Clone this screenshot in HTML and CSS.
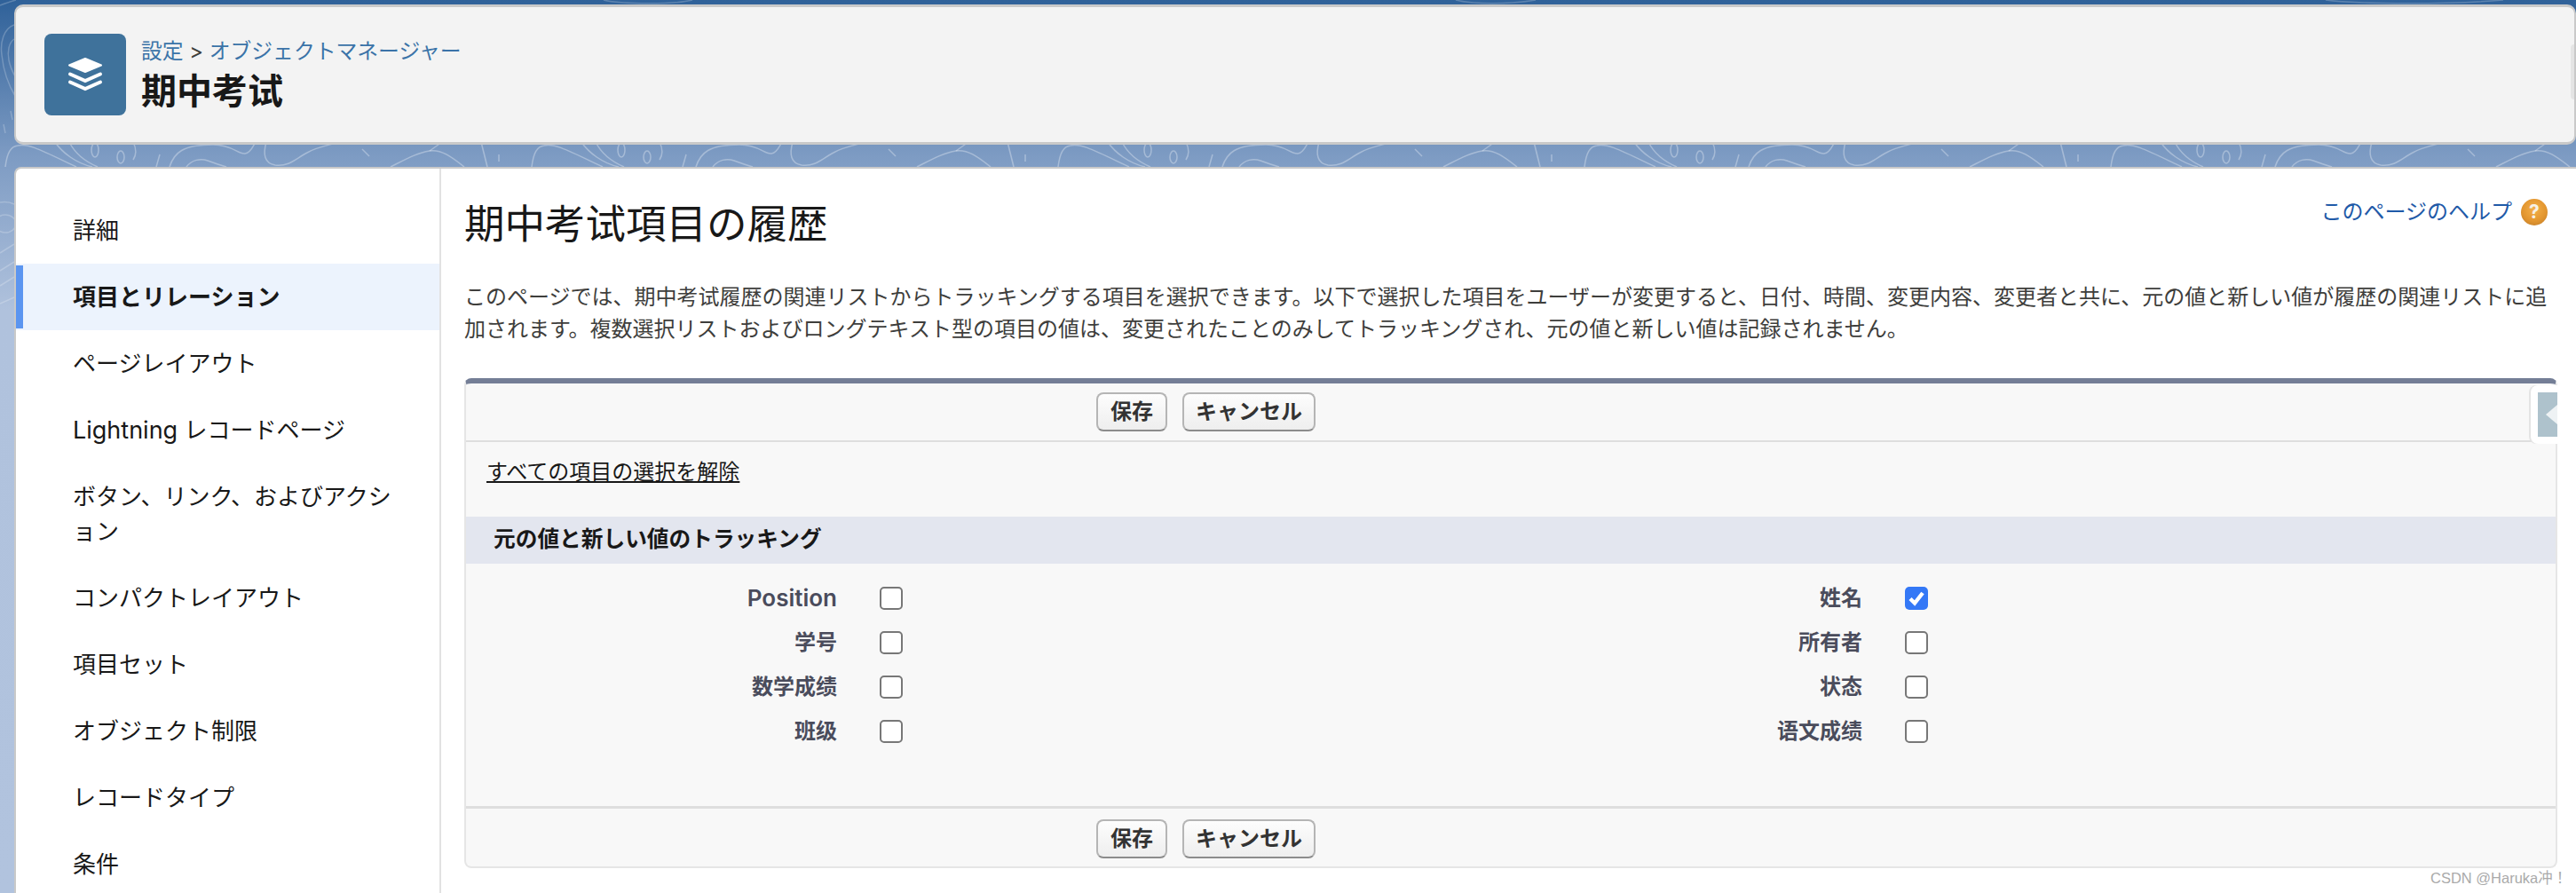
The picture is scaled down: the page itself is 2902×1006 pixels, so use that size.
FILE: index.html
```html
<!DOCTYPE html>
<html lang="ja">
<head>
<meta charset="utf-8">
<title>期中考试項目の履歴</title>
<link rel="stylesheet" href="styles.css">
</head>
<body>
<svg class="contours" viewBox="0 0 2902 1006" aria-hidden="true">
  <defs>
    <pattern id="topo" x="0" y="150" width="593" height="50" patternUnits="userSpaceOnUse">
      <g fill="none" stroke="#fff" stroke-opacity=".32" stroke-width="1.5">
        <path d="M6 38C8 22 12 15 20 14 32 11 48 20 86 38"/>
        <path d="M62 10C70 22 86 34 104 38M78 10C84 22 96 32 110 38"/>
        <ellipse cx="107" cy="19" rx="4" ry="8"/>
        <ellipse cx="136" cy="27" rx="4" ry="7"/>
        <path d="M150 10C154 18 154 24 150 30M180 24 176 38"/>
        <path d="M191 38C196 22 206 13 240 13 262 13 268 24 276 23 283 22 285 14 288 10"/>
        <path d="M210 38C216 30 226 28 234 31S248 36 255 38"/>
        <path d="M300 10C296 24 298 34 310 36 326 38 334 28 346 22 356 16 368 14 383 10"/>
        <path d="M408 18 416 26"/>
        <path d="M440 38C456 30 470 22 484 20 498 18 510 28 523 38"/>
        <path d="M484 20 498 10"/>
        <path d="M542 10 549 38"/>
        <path d="M562 24V32"/>
      </g>
    </pattern>
  </defs>
  <rect x="0" y="160" width="2902" height="30" fill="url(#topo)"/>
  <g fill="none" stroke="#fff" stroke-opacity=".22" stroke-width="1.5">
    <path d="M16 28C4 32 0 48 2 62 4 82 12 100 18 110"/>
    <path d="M16 44C10 48 8 58 10 68 12 78 16 84 18 88"/>
    <ellipse cx="6" cy="252" rx="12" ry="10"/>
    <path d="M0 228C6 227 12 228 16 230M0 285 16 275M0 305 16 295M0 322 16 312M0 342 16 335"/>
    <path d="M0 6C8 3 14 1 18 0M680 0C700 5 760 5 780 0M1640 0C1660 5 1700 5 1730 0M2620 0C2660 5 2760 5 2820 0"/>
    <path d="M12 125 14 135M4 140 6 150"/>
  </g>
</svg>

<header class="page-header">
  <div class="object-icon">
    <svg class="layers" viewBox="0 0 40 40" aria-hidden="true">
      <path fill="#fff" stroke="#fff" stroke-width="2" stroke-linejoin="round" d="M20 2 38 9.5 20 17 2 9.500Z"/>
      <path fill="none" stroke="#fff" stroke-width="4" stroke-linecap="round" d="M3 19.500 20 27 37 19.500"/>
      <path fill="none" stroke="#fff" stroke-width="4" stroke-linecap="round" d="M3 28.500 20 36 37 28.500"/>
    </svg>
  </div>
  <div class="header-text">
    <div class="crumbs"><a>設定</a> &gt; <a>オブジェクトマネージャー</a></div>
    <h1 class="object-name">期中考试</h1>
  </div>
  <span class="header-handle"></span>
</header>

<div class="panel">
  <nav class="sidebar">
    <a class="nav-item">詳細</a>
    <a class="nav-item active">項目とリレーション</a>
    <a class="nav-item">ページレイアウト</a>
    <a class="nav-item"><span class="latin">Lightning</span> レコードページ</a>
    <a class="nav-item">ボタン、リンク、およびアクション</a>
    <a class="nav-item">コンパクトレイアウト</a>
    <a class="nav-item">項目セット</a>
    <a class="nav-item">オブジェクト制限</a>
    <a class="nav-item">レコードタイプ</a>
    <a class="nav-item">条件</a>
  </nav>

  <main class="content">
    <div class="title-row">
      <h2 class="page-title">期中考试項目の履歴</h2>
      <a class="help">このページのヘルプ <span class="help-icon">?</span></a>
    </div>
    <p class="intro">このページでは、期中考试履歴の関連リストからトラッキングする項目を選択できます。以下で選択した項目をユーザーが変更すると、日付、時間、変更内容、変更者と共に、元の値と新しい値が履歴の関連リストに追加されます。複数選択リストおよびロングテキスト型の項目の値は、変更されたことのみしてトラッキングされ、元の値と新しい値は記録されません。</p>

    <section class="form-block">
      <div class="button-bar top">
        <button class="btn save">保存</button>
        <button class="btn">キャンセル</button>
        <span class="collapse"><span class="collapse-inner"><span class="arrow"></span></span></span>
      </div>
      <div class="clear-row"><a class="clear-link">すべての項目の選択を解除</a></div>
      <h3 class="section-title">元の値と新しい値のトラッキング</h3>
      <div class="fields">
        <div class="field-col">
          <label class="field"><span class="field-label latin-label">Position</span><span class="check"></span></label>
          <label class="field"><span class="field-label">学号</span><span class="check"></span></label>
          <label class="field"><span class="field-label">数学成绩</span><span class="check"></span></label>
          <label class="field"><span class="field-label">班级</span><span class="check"></span></label>
        </div>
        <div class="field-col right">
          <label class="field"><span class="field-label">姓名</span><span class="check on"><svg viewBox="0 0 26 26" aria-hidden="true"><path fill="none" stroke="#fff" stroke-width="4.400" d="M6 13.500 11 18.500 20 7"/></svg></span></label>
          <label class="field"><span class="field-label">所有者</span><span class="check"></span></label>
          <label class="field"><span class="field-label">状态</span><span class="check"></span></label>
          <label class="field"><span class="field-label">语文成绩</span><span class="check"></span></label>
        </div>
      </div>
      <div class="button-bar bottom">
        <button class="btn save">保存</button>
        <button class="btn">キャンセル</button>
      </div>
    </section>
  </main>
</div>
<div class="watermark">CSDN @Haruka冲！</div>
</body>
</html>
```
FILE: styles.css
```css
* { box-sizing: border-box; }
html, body { margin: 0; height: 1006px; overflow: hidden; }
body {
  position: relative;
  width: 2902px;
  padding: 5px 0 0 16px;
  font-family: "Inter", "Noto Sans CJK JP", sans-serif;
  color: #181818;
  background: linear-gradient(180deg, #2f6199 0, #7d9bc3 175px, #b0c2dd 350px, #b1c3de 1006px);
}
a { text-decoration: none; }
h1, h2, h3, p { margin: 0; }
.contours { position: absolute; left: 0; top: 0; width: 2902px; height: 1006px; }

.page-header {
  position: relative;
  display: flex;
  align-items: center;
  height: 158px;
  padding-left: 32px;
  background: #f3f3f3;
  border: 2px solid #c9c9c9;
  border-width: 3px 2px 3px 2px;
  border-radius: 10px;
}
.object-icon {
  display: flex;
  align-items: center;
  justify-content: center;
  width: 92px;
  height: 92px;
  background: #3f729b;
  border-radius: 8px;
}
.layers { display: block; width: 40px; height: 40px; }
.header-text { margin-left: 17px; }
.crumbs { font-size: 23.8px; line-height: 34px; color: #3e3e3c; }
.crumbs a { color: #3b73a8; }
.object-name { font-size: 40px; line-height: 50px; font-weight: 700; color: #181818; margin-top: 3px; }
.header-handle {
  position: absolute;
  right: 0;
  top: 42px;
  width: 4px;
  height: 62px;
  background: #e4e4e4;
  border-radius: 4px 0 0 4px;
}

.panel {
  position: relative;
  display: flex;
  height: 818px;
  margin-top: 25px;
  background: #fff;
  border-top: 2px solid #c9c9c9;
  border-left: 2px solid #c9c9c9;
  border-radius: 8px 0 0 0;
}
.sidebar {
  flex: none;
  width: 479px;
  padding-top: 32px;
  border-right: 2px solid #e2e2e2;
}
.nav-item {
  display: block;
  position: relative;
  min-height: 75px;
  padding: 18px 40px 18px 64px;
  font-size: 26px;
  line-height: 39px;
  color: #181818;
}
.latin { font-size: 27px; }
.nav-item.active { background: #ecf3fd; font-weight: 700; }
.nav-item.active::before {
  content: "";
  position: absolute;
  left: 0;
  top: 2px;
  bottom: 2px;
  width: 8px;
  background: #5b95f0;
}
.content { flex: 1; min-width: 0; padding: 34px 21px 0 26px; }
.title-row { display: flex; justify-content: space-between; align-items: flex-start; }
.page-title { font-size: 45.500px; line-height: 58px; font-weight: 400; color: #181818; }
.help { display: flex; align-items: center; font-size: 24px; line-height: 30px; color: #1f5aa8; gap: 10px; margin-right: 11px; }
.help-icon {
  display: block;
  width: 30px;
  height: 30px;
  border-radius: 50%;
  background: radial-gradient(circle at 50% 40%, #f4b04a 0, #e3962f 55%, #b9782a 100%);
  color: #f6f1e6;
  font-size: 21px;
  font-weight: 700;
  line-height: 30px;
  text-align: center;
}
.intro { margin-top: 35px; font-size: 24px; line-height: 36px; color: #3e3e3c; }

.form-block {
  margin-top: 37px;
  background: #f8f8f8;
  border-top: 6px solid #747e96;
  border-left: 2px solid #e6e6e6;
  border-right: 2px solid #e6e6e6;
  border-bottom: 2px solid #e6e6e6;
  border-radius: 8px;
}
.button-bar {
  position: relative;
  display: flex;
  align-items: center;
  gap: 17px;
  padding-left: 710px;
}
.button-bar.top { height: 66px; border-bottom: 2px solid #dedede; }
.button-bar.bottom { height: 68px; padding-top: 3px; border-top: 3px solid #dedede; }
.btn {
  width: 150px;
  height: 44px;
  padding: 0;
  font-family: inherit;
  font-size: 24px;
  font-weight: 700;
  line-height: 1;
  color: #333;
  background: linear-gradient(#fdfdfd, #eeeeee);
  border: 2px solid #b5b5b5;
  border-bottom-color: #8c8c8c;
  border-radius: 8px;
}
.btn.save { width: 80px; }
.collapse {
  position: absolute;
  right: -2px;
  top: 2px;
  display: block;
  width: 30px;
  height: 66px;
  padding: 8px 0 8px 8px;
  background: #fff;
  border-radius: 8px 0 0 8px;
  box-shadow: -2px 0 0 #e4e4e4;
}
.collapse-inner { display: flex; align-items: center; justify-content: flex-end; height: 50px; background: #aec2cc; }
.arrow { width: 0; height: 0; border: 11px solid transparent; border-right: 13px solid #eef2f4; border-left: 0; }

.clear-row { height: 84px; padding: 16px 0 0 23px; }
.clear-link { font-size: 24px; line-height: 36px; color: #181818; text-decoration: underline; }
.section-title {
  height: 53px;
  padding-left: 31px;
  font-size: 24.700px;
  line-height: 51px;
  font-weight: 700;
  color: #181818;
  background: #e3e6ef;
}
.fields { display: flex; height: 273px; padding-top: 26px; }
.field-col { display: flex; flex-direction: column; gap: 24px; width: 1157px; }
.field { display: flex; align-items: center; height: 26px; }
.field-label {
  flex: none;
  width: 418px;
  text-align: right;
  font-size: 24px;
  line-height: 26px;
  font-weight: 600;
  color: #4a4c5c;
  font-family: "Inter", "Noto Sans CJK SC", sans-serif;
}
.latin-label { font-size: 26px; font-weight: 600; }
.field-col.right .field-label { width: 416px; }
.check {
  display: block;
  flex: none;
  width: 26px;
  height: 26px;
  margin-left: 48px;
  background: #fff;
  border: 2px solid #777;
  border-radius: 5px;
}
.check.on { background: #3478f6; border: 0; }
.check.on svg { display: block; width: 26px; height: 26px; }
.watermark {
  position: absolute;
  left: 2738px;
  top: 979px;
  font-family: "Liberation Sans", "Noto Sans CJK SC", sans-serif;
  font-size: 16.500px;
  line-height: 20px;
  color: #aaa;
}
```
